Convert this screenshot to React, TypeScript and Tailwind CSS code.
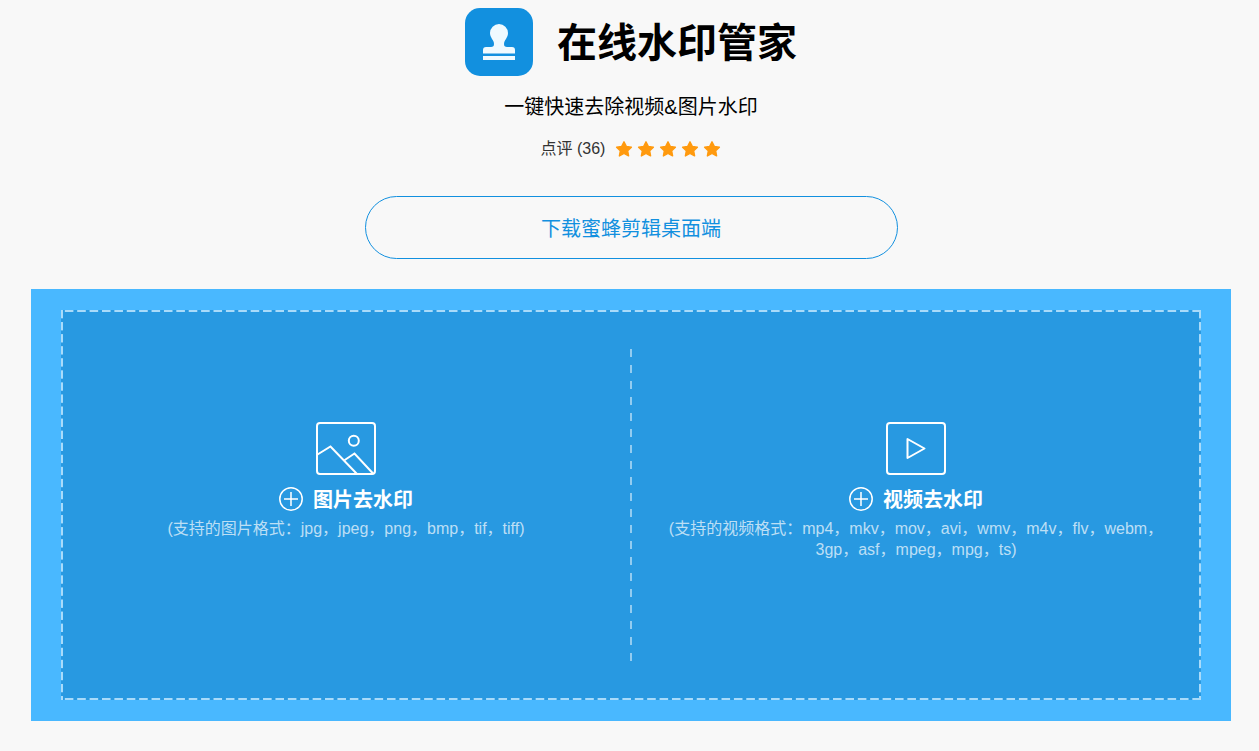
import type { ReactNode } from "react";

const STARS = [1, 2, 3, 4, 5];

function LogoIcon() {
  return (
    <svg className="size-[68px] shrink-0" viewBox="0 0 68 68" aria-hidden="true">
      <rect width="68" height="68" rx="15" fill="#1290df" />
      <path
        d="M34 16a9 9 0 0 1 9 9c0 5-4 7-4 11 0 2.200 1 3 3 3h5a3 3 0 0 1 3 3v3.500H18V42a3 3 0 0 1 3-3h5c2 0 3-.8 3-3 0-4-4-6-4-11a9 9 0 0 1 9-9Z"
        fill="#effaff"
      />
      <path d="M18 48h32v4H18z" fill="#effaff" />
    </svg>
  );
}

function StarIcon() {
  return (
    <svg className="size-[18px]" viewBox="0 0 18 18" aria-hidden="true">
      <path
        d="M9 1.800 11.300 6.400 16.400 7.200 12.700 10.800 13.600 15.900 9 13.500 4.400 15.900 5.300 10.800 1.600 7.200 6.700 6.400Z"
        fill="#ff9a0f"
        stroke="#ff9a0f"
        strokeWidth="1.400"
        strokeLinejoin="round"
      />
    </svg>
  );
}

function PictureIcon() {
  return (
    <svg width="60" height="53" viewBox="0 0 60 53" fill="none" stroke="#fff" strokeWidth="2" aria-hidden="true">
      <rect x="1" y="1" width="58" height="51" rx="3" />
      <circle cx="37.800" cy="18.800" r="5" />
      <path d="M1.500 32.500 14.500 24.500 41 52M28 38.500 38.500 31.500 57.500 52" />
    </svg>
  );
}

function VideoIcon() {
  return (
    <svg width="60" height="53" viewBox="0 0 60 53" fill="none" stroke="#fff" strokeWidth="2" aria-hidden="true">
      <rect x="1" y="1" width="58" height="51" rx="3" />
      <path d="M21.500 17v19L38.500 26.500Z" strokeLinejoin="round" />
    </svg>
  );
}

function PlusIcon() {
  return (
    <svg className="size-6" viewBox="0 0 24 24" fill="none" stroke="#fff" strokeWidth="1.500" aria-hidden="true">
      <circle cx="12" cy="12" r="11.200" />
      <path d="M12 5v14M5 12h14" />
    </svg>
  );
}

function UploadPane({ icon, title, formats }: { icon: ReactNode; title: string; formats: string }) {
  return (
    <button
      type="button"
      className="flex min-w-0 flex-1 cursor-pointer flex-col items-center px-9 pt-28 pb-10 text-white"
    >
      {icon}
      <span className="mt-2.5 flex h-7 items-center gap-2.5 text-xl font-bold">
        <PlusIcon />
        <span className="pt-0.5">{title}</span>
      </span>
      <span className="mt-[5px] text-base leading-[21px] text-white/70">{formats}</span>
    </button>
  );
}

export default function App() {
  return (
    <main className="min-h-screen bg-[#f8f8f8] pt-2 pb-[30px] pl-[3px] font-['Liberation_Sans','Noto_Sans_CJK_SC',sans-serif] text-black">
      <header className="flex flex-col items-center px-4">
        <div className="flex items-center gap-6">
          <LogoIcon />
          <h1 className="pt-0.5 text-[40px] leading-[66px] font-bold">在线水印管家</h1>
        </div>
        <p className="mt-4 text-xl leading-[30px]">一键快速去除视频&amp;图片水印</p>
        <div className="mt-[15px] flex h-6 items-center gap-2.5 text-base text-[#333]">
          <span>点评 (36)</span>
          <span className="flex gap-1" role="img" aria-label="5 / 5">
            {STARS.map((n) => (
              <StarIcon key={n} />
            ))}
          </span>
        </div>
        <a
          href="#download"
          className="mt-[35px] flex h-[63px] w-full max-w-[533px] items-center justify-center rounded-full border border-[#1290df] pt-0.5 text-xl text-[#1290df]"
        >
          下载蜜蜂剪辑桌面端
        </a>
      </header>

      <section className="mx-auto mt-[30px] max-w-[1200px] bg-[#49b8ff] px-[30px] py-[21px]">
        {/* dashed frame: one repeating strip per side */}
        <div className="flex min-h-[390px] bg-[#2899e1] bg-[image:linear-gradient(90deg,transparent_4px,#a9dbfa_4px),linear-gradient(90deg,transparent_4px,#a9dbfa_4px),linear-gradient(#a9dbfa_8px,transparent_8px),linear-gradient(#a9dbfa_8px,transparent_8px)] bg-[length:calc(100%/92)_2px,calc(100%/92)_2px,2px_calc(99%/32),2px_calc(99%/32)] bg-[position:left_top,left_bottom,left_top,right_top] [background-repeat:repeat-x,repeat-x,repeat-y,repeat-y]">
          <UploadPane
            icon={<PictureIcon />}
            title="图片去水印"
            formats="(支持的图片格式：jpg，jpeg，png，bmp，tif，tiff)"
          />
          <div className="-mx-px my-[39px] w-0.5 shrink-0 bg-[image:repeating-linear-gradient(#93ccf0_0_8px,transparent_8px_16px)]" />
          <UploadPane
            icon={<VideoIcon />}
            title="视频去水印"
            formats="(支持的视频格式：mp4，mkv，mov，avi，wmv，m4v，flv，webm，3gp，asf，mpeg，mpg，ts)"
          />
        </div>
      </section>
    </main>
  );
}
